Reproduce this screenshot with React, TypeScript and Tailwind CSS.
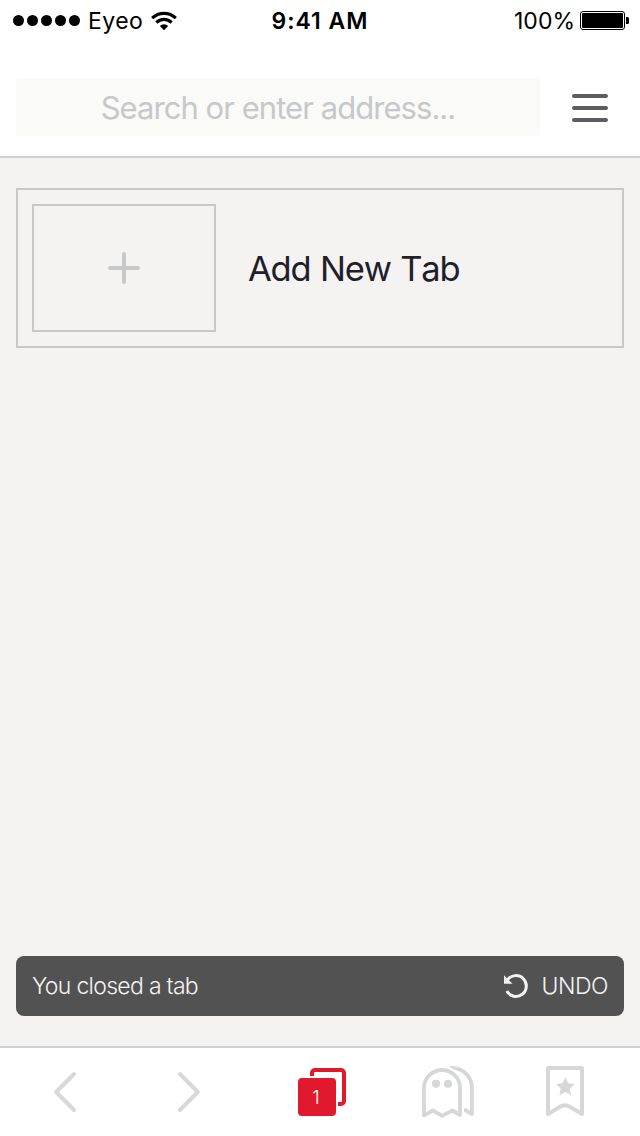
import { useState } from "react";

/* ================= ICONS ================= */

function WifiIcon() {
  return (
    <svg width="26" height="20" viewBox="0 0 26 20" fill="none">
      <path d="M1.2 7.2a16.8 16.8 0 0 1 23.6 0" stroke="#000" strokeWidth="3.2" />
      <path d="M5.4 11.6a10.8 10.8 0 0 1 15.2 0" stroke="#000" strokeWidth="3.2" />
      <path d="M8.8 15a6 6 0 0 1 8.4 0L13 19.2z" fill="#000" />
    </svg>
  );
}

function BatteryIcon() {
  return (
    <svg width="49" height="20" viewBox="0 0 49 20" fill="none">
      <rect x="0.5" y="0.5" width="44" height="18" rx="2.5" stroke="#000" />
      <rect x="2" y="2" width="41" height="15" rx="1" fill="#000" />
      <path d="M46 6h1.5a1.5 1.5 0 0 1 1.5 1.5v4a1.5 1.5 0 0 1-1.5 1.5H46z" fill="#000" />
    </svg>
  );
}

function UndoIcon() {
  return (
    <svg width="24" height="24" viewBox="0 0 24 24" fill="none">
      <path d="M3.4 6a10.4 10.4 0 1 1-.6 11" stroke="#f4f3f1" strokeWidth="3" />
      <path d="M0 1.2v8.6h8.6z" fill="#f4f3f1" />
    </svg>
  );
}

function BackIcon() {
  return (
    <svg width="24" height="52" viewBox="0 0 24 52" fill="none">
      <path d="M20 8 2.2 26 20 44" stroke="#d8d8d8" strokeWidth="4" strokeLinecap="round" strokeLinejoin="round" />
    </svg>
  );
}

function ForwardIcon() {
  return (
    <svg width="24" height="52" viewBox="0 0 24 52" fill="none">
      <path d="M2 8l17.8 18L2 44" stroke="#d8d8d8" strokeWidth="4" strokeLinecap="round" strokeLinejoin="round" />
    </svg>
  );
}

function GhostIcon() {
  return (
    <svg width="53" height="52" viewBox="0 0 53 52" fill="none" stroke="#d6d8d8" strokeWidth="3.8" strokeLinejoin="round">
      <path d="M28 2h2a20 20 0 0 1 20 20v26l-8-4.5" />
      {/* white edge keeps the two ghosts apart */}
      <path d="M2 22a18 18 0 0 1 36 0v27l-7.6-4.5-10.2 5.4-9.4-5.4L2 49.5z" stroke="#fff" strokeWidth="8" />
      <path d="M2 22a18 18 0 0 1 36 0v27l-7.6-4.5-10.2 5.4-9.4-5.4L2 49.5z" />
      <circle cx="14" cy="17.8" r="4.1" fill="#d6d8d8" stroke="none" />
      <circle cx="26" cy="17.8" r="4.1" fill="#d6d8d8" stroke="none" />
    </svg>
  );
}

function BookmarkIcon() {
  return (
    <svg width="38" height="52" viewBox="0 0 38 52" fill="none">
      <path d="M2 2h34v46l-12.5-7.4a9 9 0 0 0-9 0L2 48z" stroke="#d6d8d8" strokeWidth="4" strokeLinejoin="round" />
      <path d="M19.3 11.2l2.8 6.1 6.7.8-4.9 4.5 1.3 6.6-5.9-3.3-5.9 3.3 1.3-6.6-4.9-4.5 6.7-.8z" fill="#d6d8d8" />
    </svg>
  );
}

/* ================= SECTIONS ================= */

function StatusBar() {
  return (
    <div className="grid h-10 grid-cols-3 pl-[13px] pr-[11px] text-[23px] leading-[42px] text-black">
      <div className="flex items-center">
        <div className="flex gap-[3px] pb-px">
          {[0, 1, 2, 3, 4].map((i) => (
            <span key={i} className="size-[11px] rounded-full bg-black" />
          ))}
        </div>
        <span className="ml-2 mr-2 tracking-[0.45px]">Eyeo</span>
        <div className="pb-px">
          <WifiIcon />
        </div>
      </div>
      <div className="-ml-0.5 text-center font-[560] tracking-[1px]">9:41 AM</div>
      <div className="flex items-center justify-end gap-1.5">
        <span className="-mr-px">100%</span>
        <BatteryIcon />
      </div>
    </div>
  );
}

function AddressBar() {
  return (
    <div className="flex h-[118px] items-start border-b-2 border-[#cfd1d5] pt-[38px] pl-4 pr-8">
      <input
        placeholder="Search or enter address..."
        className="h-[58px] w-[524px] rounded-[3px] bg-[#fafaf8] px-2 text-center text-[31px] tracking-[-0.95px] outline-none placeholder:text-[#c7c8ca]"
      />
      <button aria-label="Menu" className="ml-8 mt-4 flex w-9 flex-col gap-2">
        <span className="h-1 rounded-full bg-[#5c5d60]" />
        <span className="h-1 rounded-full bg-[#5c5d60]" />
        <span className="h-1 rounded-full bg-[#5c5d60]" />
      </button>
    </div>
  );
}

function TabBar({ count }: { count: number }) {
  return (
    <nav className="grid h-[90px] grid-cols-[124px_124px_120px_124px_100px] items-start justify-items-start overflow-hidden border-t-2 border-[#cfd0d1] bg-white pl-[54px] pt-[18px]">
      <button aria-label="Back"><BackIcon /></button>
      <button aria-label="Forward"><ForwardIcon /></button>
      <button aria-label="Tabs" className="relative -ml-1 h-[52px] w-12">
        <svg width="48" height="52" viewBox="0 0 48 52" fill="none">
          <path d="M14 10V7a3 3 0 0 1 3-3h26a3 3 0 0 1 3 3v28a3 3 0 0 1-3 3h-3" stroke="#e1192c" strokeWidth="4" />
          <rect y="12" width="38" height="38" rx="4" fill="#e1192c" />
        </svg>
        <span className="absolute left-0 top-3 w-9 text-center text-[19px] font-[350] leading-[39px] text-white">
          {count}
        </span>
      </button>
      <button aria-label="Private browsing"><GhostIcon /></button>
      <button aria-label="Bookmarks"><BookmarkIcon /></button>
    </nav>
  );
}

export default function App() {
  const [count, setCount] = useState(1);

  return (
    <div className="flex h-[1136px] w-[640px] flex-col overflow-hidden bg-white font-['Inter',sans-serif]">
      <StatusBar />
      <AddressBar />

      <main className="flex flex-1 flex-col justify-between bg-[#f4f3f1] px-4 pb-[30px] pt-[30px]">
        <button
          onClick={() => setCount(count + 1)}
          className="flex h-40 items-center border-2 border-[#c6c8ca] px-3.5"
        >
          <span className="flex h-32 w-[184px] items-center justify-center border-2 border-[#c6c8ca]">
            <svg width="32" height="32" viewBox="0 0 32 32">
              <path d="M16 2v28M2 16h28" stroke="#c7c8ca" strokeWidth="4" strokeLinecap="round" />
            </svg>
          </span>
          <span className="ml-8 pt-0.5 text-[34.5px] tracking-[-1.2px] text-[#20202a] [font-kerning:none] [word-spacing:1px]">
            Add New Tab
          </span>
        </button>

        <div className="flex h-[60px] items-center justify-between rounded-lg bg-[#525252] px-4 text-[23px] text-[#f4f3f1]">
          <span className="font-[350] tracking-[-0.7px]">You closed a tab</span>
          <button className="flex items-center gap-3.5 font-[350] tracking-[-0.5px]">
            <UndoIcon />
            UNDO
          </button>
        </div>
      </main>

      <TabBar count={count} />
    </div>
  );
}
